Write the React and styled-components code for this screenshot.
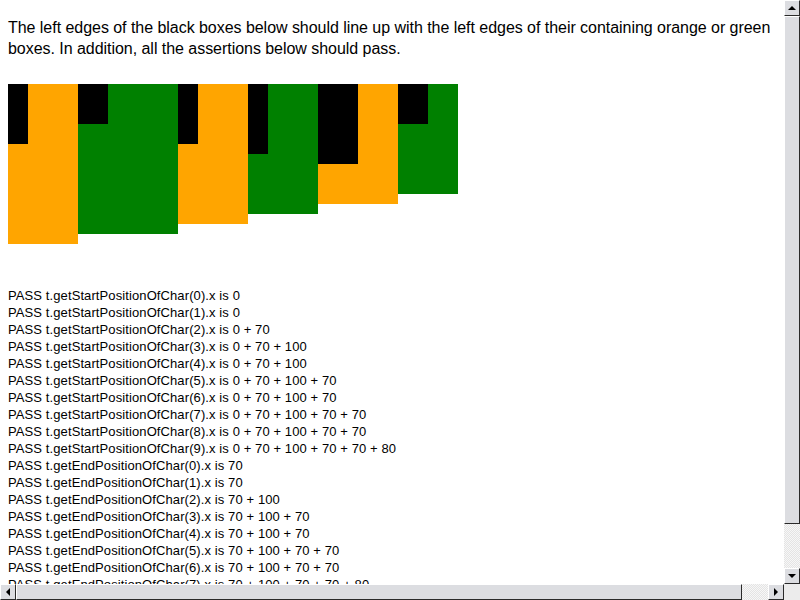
import React from 'react';
import styled, { createGlobalStyle } from 'styled-components';

const GlobalStyle = createGlobalStyle`
    html, body {
        margin: 0;
        padding: 0;
        background: #fff;
        overflow: hidden;
    }
`;

const Window = styled.div`
    display: grid;
    grid-template-columns: 784px 16px;
    grid-template-rows: 584px 16px;
    width: 800px;
    height: 600px;
    background: #fff;
`;

const Viewport = styled.div`
    overflow: hidden;
    padding: 0 8px;
    color: #000;
    font-family: "Liberation Sans", Arial, sans-serif;
`;

const Intro = styled.p`
    margin: 17px 0 0;
    font-size: 16px;
    line-height: 21px;
    letter-spacing: -0.04px;
`;

const BoxRow = styled.div`
    display: flex;
    align-items: flex-start;
    margin-top: 25px;
    height: 160px;
`;

const Cell = styled.div`
    flex: none;
    width: ${({ w }) => w}px;
    height: ${({ h }) => h}px;
    background: ${({ tone }) => tone === 'orange' ? 'orange' : 'green'};
`;

const Marker = styled.div`
    width: ${({ w }) => w}px;
    height: ${({ h }) => h}px;
    background: #000;
`;

const Console = styled.div`
    margin-top: 43px;
    font-size: 13px;
    line-height: 17px;
    letter-spacing: 0.1px;
    white-space: nowrap;
`;

const VBar = styled.div`
    display: flex;
    flex-direction: column;
    background: repeating-conic-gradient(#e4e4e4 0 25%, #f7f7f7 0 50%) 0 0 / 2px 2px;
`;

const HBar = styled(VBar)`
    flex-direction: row;
`;

const Corner = styled.div`
    background: #ececec;
`;

const Bevel = styled.div`
    box-sizing: border-box;
    background: #dcdde1;
    border-top: 1px solid #fff;
    border-left: 1px solid #fff;
    border-right: 1px solid #2a2a2a;
    border-bottom: 1px solid #2a2a2a;
`;

const Button = styled(Bevel)`
    flex: none;
    width: 16px;
    height: 16px;
    display: flex;
    align-items: center;
    justify-content: center;
`;

const Thumb = styled(Bevel)`
    flex: none;
    ${({ vertical, size }) => vertical ? `height: ${size}px;` : `width: ${size}px;`}
`;

const Track = styled.div`
    flex: 1;
`;

const Arrow = styled.div`
    width: 0;
    height: 0;
    border-style: solid;
    border-color: transparent;
    ${({ dir }) => ({
        up: 'border-width: 0 4px 4px 4px; border-bottom-color: #000;',
        down: 'border-width: 4px 4px 0 4px; border-top-color: #000;',
        left: 'border-width: 4px 4px 4px 0; border-right-color: #000;',
        right: 'border-width: 4px 0 4px 4px; border-left-color: #000;',
    })[dir]}
`;

const cells = [
    { tone: 'orange', w: 70, h: 160, bw: 20, bh: 60 },
    { tone: 'green', w: 100, h: 150, bw: 30, bh: 40 },
    { tone: 'orange', w: 70, h: 140, bw: 20, bh: 60 },
    { tone: 'green', w: 70, h: 130, bw: 20, bh: 70 },
    { tone: 'orange', w: 80, h: 120, bw: 40, bh: 80 },
    { tone: 'green', w: 60, h: 110, bw: 30, bh: 40 },
];

// which cell each character falls in
const charCells = [0, 0, 1, 2, 2, 3, 3, 4, 4, 5];

const sum = parts => parts.join(' + ');

const lines = [
    ...charCells.map((c, i) => `PASS t.getStartPositionOfChar(${i}).x is ${sum([0, ...cells.slice(0, c).map(x => x.w)])}`),
    ...charCells.map((c, i) => `PASS t.getEndPositionOfChar(${i}).x is ${sum(cells.slice(0, c + 1).map(x => x.w))}`),
];

const App = () => (
    <>
        <GlobalStyle />
        <Window>
            <Viewport>
                <Intro>
                    The left edges of the black boxes below should line up with the left edges of their containing orange or green boxes. In addition, all the assertions below should pass.
                </Intro>
                <BoxRow>
                    {cells.map((c, i) => (
                        <Cell key={i} tone={c.tone} w={c.w} h={c.h}>
                            <Marker w={c.bw} h={c.bh} />
                        </Cell>
                    ))}
                </BoxRow>
                <Console>
                    {lines.map(l => <div key={l}>{l}</div>)}
                </Console>
            </Viewport>
            <VBar>
                <Button><Arrow dir="up" /></Button>
                <Thumb vertical size={508} />
                <Track />
                <Button><Arrow dir="down" /></Button>
            </VBar>
            <HBar>
                <Button><Arrow dir="left" /></Button>
                <Thumb size={726} />
                <Track />
                <Button><Arrow dir="right" /></Button>
            </HBar>
            <Corner />
        </Window>
    </>
);

export default App;
